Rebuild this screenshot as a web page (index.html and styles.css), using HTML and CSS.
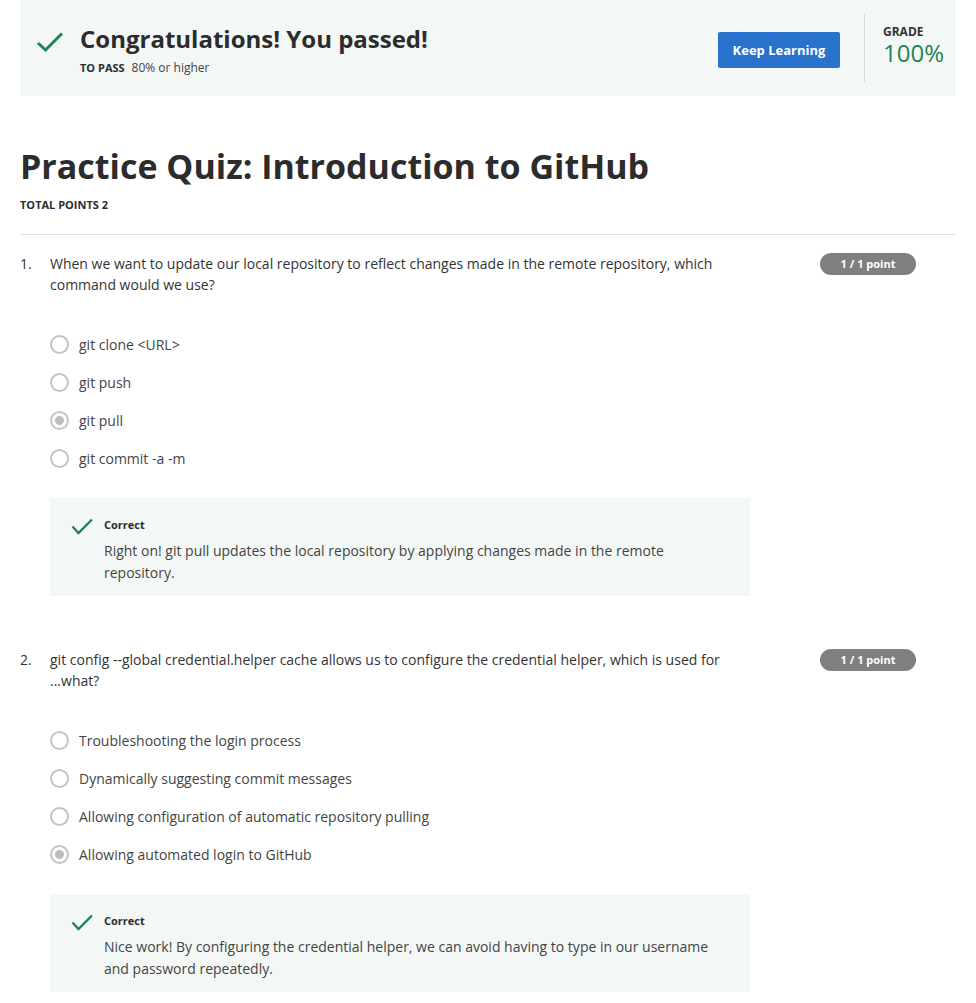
FILE: index.html
```html
<!DOCTYPE html>
<html>
<head>
<meta charset="utf-8">
<link rel="stylesheet" href="styles.css">
</head>
<body>
<div class="page">
  <section class="banner">
    <div class="banner-main">
      <svg class="banner-check" width="28" height="22" viewBox="0 0 28 22"><path d="M2 12 L9.5 19 L26 2.5" fill="none" stroke="#1f8354" stroke-width="3"/></svg>
      <div class="banner-text">
        <h2 class="banner-title">Congratulations! You passed!</h2>
        <div class="banner-sub"><span class="to-pass">TO PASS</span><span class="pass-val">80% or higher</span></div>
      </div>
    </div>
    <button class="keep-btn">Keep Learning</button>
    <div class="grade">
      <div class="grade-label">GRADE</div>
      <div class="grade-val">100%</div>
    </div>
  </section>

  <h1 class="quiz-title">Practice Quiz: Introduction to GitHub</h1>
  <div class="total-points">TOTAL POINTS 2</div>
  <hr class="sep">

  <div class="question">
    <div class="q-head">
      <span class="q-num">1.</span>
      <p class="q-text">When we want to update our local repository to reflect changes made in the remote repository, which command would we use?</p>
      <span class="badge">1 / 1 point</span>
    </div>
    <ul class="options">
      <li class="opt"><span class="radio"></span>git clone &lt;URL&gt;</li>
      <li class="opt"><span class="radio"></span>git push</li>
      <li class="opt"><span class="radio checked"></span>git pull</li>
      <li class="opt"><span class="radio"></span>git commit -a -m</li>
    </ul>
    <div class="feedback">
      <svg class="fb-check" width="22" height="18" viewBox="0 0 22 18"><path d="M1.5 8.5 L7.5 15 L21 1.5" fill="none" stroke="#1f8354" stroke-width="2.4"/></svg>
      <div class="fb-body">
        <div class="fb-title">Correct</div>
        <p class="fb-text">Right on! git pull updates the local repository by applying changes made in the remote repository.</p>
      </div>
    </div>
  </div>

  <div class="question">
    <div class="q-head">
      <span class="q-num">2.</span>
      <p class="q-text">git config --global credential.helper cache allows us to configure the credential helper, which is used for ...what?</p>
      <span class="badge">1 / 1 point</span>
    </div>
    <ul class="options">
      <li class="opt"><span class="radio"></span>Troubleshooting the login process</li>
      <li class="opt"><span class="radio"></span>Dynamically suggesting commit messages</li>
      <li class="opt"><span class="radio"></span>Allowing configuration of automatic repository pulling</li>
      <li class="opt"><span class="radio checked"></span>Allowing automated login to GitHub</li>
    </ul>
    <div class="feedback">
      <svg class="fb-check" width="22" height="18" viewBox="0 0 22 18"><path d="M1.5 8.5 L7.5 15 L21 1.5" fill="none" stroke="#1f8354" stroke-width="2.4"/></svg>
      <div class="fb-body">
        <div class="fb-title">Correct</div>
        <p class="fb-text">Nice work! By configuring the credential helper, we can avoid having to type in our username and password repeatedly.</p>
      </div>
    </div>
  </div>
</div>
</body>
</html>
```

FILE: styles.css
```css
* { box-sizing: border-box; }
html, body { margin: 0; padding: 0; background: #fff; }
body {
  font-family: "Open Sans", "Liberation Sans", sans-serif;
  color: #333;
  overflow: hidden;
}
.page { padding: 0 20px; }

.banner {
  background: #f3f8f6;
  height: 96px;
  display: flex;
  align-items: center;
  padding: 0 0 0 16px;
}
.banner-main { display: flex; align-items: flex-start; flex: 1; margin-top: 4px; }
.banner-check { margin-top: 7px; margin-right: 16px; flex-shrink: 0; }
.banner-title {
  margin: 0;
  font-size: 24px;
  font-weight: 700;
  line-height: 30px;
  color: #2c2c2c;
}
.banner-sub { margin-top: 6px; font-size: 12px; line-height: 16px; }
.to-pass { font-weight: 700; font-size: 11px; margin-right: 7px; color: #2c2c2c; }
.pass-val { color: #444; }

.keep-btn {
  background: #2a73cc;
  color: #fff;
  border: none;
  border-radius: 2px;
  width: 122px;
  height: 36px;
  font-family: inherit;
  font-weight: 700;
  font-size: 13px;
  margin-right: 24px;
  margin-top: 4px;
}
.grade {
  border-left: 1px solid #dadada;
  height: 68px;
  padding-left: 18px;
  width: 92px;
  align-self: center;
}
.grade-label { font-size: 12px; font-weight: 700; color: #333; margin-top: 11px; line-height: 14px; }
.grade-val { font-size: 24px; color: #1f8354; font-weight: 400; line-height: 28px; }

.quiz-title {
  margin: 46px 0 0;
  font-size: 34px;
  font-weight: 700;
  line-height: 48px;
  color: #2c2c2c;
}
.total-points {
  margin-top: 7px;
  font-size: 11px;
  font-weight: 700;
  color: #2c2c2c;
  line-height: 16px;
}
.sep { border: 0; border-top: 1px solid #e1e1e1; margin: 21px 0 0; }

.question { padding-top: 18px; }
.question + .question { padding-top: 53px; }
.q-head { display: flex; align-items: flex-start; }
.q-num { width: 30px; flex-shrink: 0; font-size: 14px; line-height: 21px; color: #333; }
.q-text { margin: 0; width: 680px; font-size: 14px; line-height: 21px; color: #333; }
.badge {
  margin-left: auto;
  margin-right: 40px;
  margin-top: 0;
  background: #7f7f7f;
  color: #fff;
  font-size: 11px;
  font-weight: 700;
  border-radius: 12px;
  width: 96px;
  height: 22px;
  line-height: 22px;
  text-align: center;
  flex-shrink: 0;
}
.options { list-style: none; margin: 30px 0 0 30px; padding: 0; }
.opt {
  display: flex;
  align-items: center;
  height: 38px;
  font-size: 14px;
  color: #444;
}
.radio {
  width: 19px;
  height: 19px;
  border: 2px solid #c4c4c4;
  border-radius: 50%;
  margin-right: 10px;
  display: flex;
  align-items: center;
  justify-content: center;
  flex-shrink: 0;
}
.radio.checked::after {
  content: "";
  width: 9px;
  height: 9px;
  border-radius: 50%;
  background: #bdbdbd;
}

.feedback {
  margin: 21px 0 0 30px;
  width: 700px;
  background: #f3f8f6;
  display: flex;
  align-items: flex-start;
  padding: 19px 20px 10px 21px;
  min-height: 98px;
}
.fb-check { margin-top: 1px; margin-right: 11px; flex-shrink: 0; }
.fb-title { font-size: 11px; font-weight: 700; line-height: 16px; color: #2c2c2c; }
.fb-text { margin: 7px 0 0; font-size: 14px; line-height: 22px; color: #444; }
```
